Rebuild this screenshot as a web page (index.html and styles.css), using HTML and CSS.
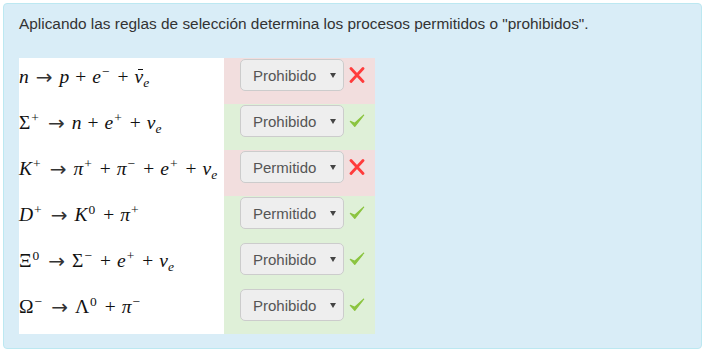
FILE: index.html
```html
<!DOCTYPE html>
<html lang="es">
<head>
    <meta charset="UTF-8">
    <meta name="viewport" content="width=device-width, initial-scale=1.0">
    <title>Reglas de selección</title>

    <link rel="stylesheet" href="styles.css">
</head>
<body>
    <div class="panel">
        <p class="enunciado">Aplicando las reglas de selección determina los procesos permitidos o "prohibidos".</p>

        <table class="procesos">
            <tr class="mal">
                <td class="eq"><i>n</i><span class="rel">→</span><i>p</i><span class="op">+</span><i>e</i><sup>−</sup><span class="op">+</span><i class="bar">ν</i><sub><i>e</i></sub></td>
                <td class="resp">
                    <div class="fila">
                        <span class="sel"><select><option>Prohibido</option><option>Permitido</option></select></span>
                        <svg class="icono" viewBox="0 0 16 16"><path d="M2 1.5 L14 14.5 M14 1.5 L2 14.5" stroke="#ff3b3b" stroke-width="2.8" stroke-linecap="round"/></svg>
                    </div>
                </td>
            </tr>
            <tr class="bien">
                <td class="eq">Σ<sup>+</sup><span class="rel">→</span><i>n</i><span class="op">+</span><i>e</i><sup>+</sup><span class="op">+</span><i>ν</i><sub><i>e</i></sub></td>
                <td class="resp">
                    <div class="fila">
                        <span class="sel"><select><option>Prohibido</option><option>Permitido</option></select></span>
                        <svg class="icono" viewBox="0 0 18 16"><path d="M1.5 8.5 L6.5 14 L16.5 1.5 L6.5 10.5 Z" fill="#8bc43f" stroke="#8bc43f" stroke-width="1.4" stroke-linejoin="round"/></svg>
                    </div>
                </td>
            </tr>
            <tr class="mal">
                <td class="eq"><i>K</i><sup>+</sup><span class="rel">→</span><i>π</i><sup>+</sup><span class="op">+</span><i>π</i><sup>−</sup><span class="op">+</span><i>e</i><sup>+</sup><span class="op">+</span><i>ν</i><sub><i>e</i></sub></td>
                <td class="resp">
                    <div class="fila">
                        <span class="sel"><select><option>Permitido</option><option>Prohibido</option></select></span>
                        <svg class="icono" viewBox="0 0 16 16"><path d="M2 1.5 L14 14.5 M14 1.5 L2 14.5" stroke="#ff3b3b" stroke-width="2.8" stroke-linecap="round"/></svg>
                    </div>
                </td>
            </tr>
            <tr class="bien">
                <td class="eq"><i>D</i><sup>+</sup><span class="rel">→</span><i>K</i><sup>0</sup><span class="op">+</span><i>π</i><sup>+</sup></td>
                <td class="resp">
                    <div class="fila">
                        <span class="sel"><select><option>Permitido</option><option>Prohibido</option></select></span>
                        <svg class="icono" viewBox="0 0 18 16"><path d="M1.5 8.5 L6.5 14 L16.5 1.5 L6.5 10.5 Z" fill="#8bc43f" stroke="#8bc43f" stroke-width="1.4" stroke-linejoin="round"/></svg>
                    </div>
                </td>
            </tr>
            <tr class="bien">
                <td class="eq">Ξ<sup>0</sup><span class="rel">→</span>Σ<sup>−</sup><span class="op">+</span><i>e</i><sup>+</sup><span class="op">+</span><i>ν</i><sub><i>e</i></sub></td>
                <td class="resp">
                    <div class="fila">
                        <span class="sel"><select><option>Prohibido</option><option>Permitido</option></select></span>
                        <svg class="icono" viewBox="0 0 18 16"><path d="M1.5 8.5 L6.5 14 L16.5 1.5 L6.5 10.5 Z" fill="#8bc43f" stroke="#8bc43f" stroke-width="1.4" stroke-linejoin="round"/></svg>
                    </div>
                </td>
            </tr>
            <tr class="bien">
                <td class="eq">Ω<sup>−</sup><span class="rel">→</span>Λ<sup>0</sup><span class="op">+</span><i>π</i><sup>−</sup></td>
                <td class="resp">
                    <div class="fila">
                        <span class="sel"><select><option>Prohibido</option><option>Permitido</option></select></span>
                        <svg class="icono" viewBox="0 0 18 16"><path d="M1.5 8.5 L6.5 14 L16.5 1.5 L6.5 10.5 Z" fill="#8bc43f" stroke="#8bc43f" stroke-width="1.4" stroke-linejoin="round"/></svg>
                    </div>
                </td>
            </tr>
        </table>
    </div>
</body>
</html>
```

FILE: styles.css
```css
body{
    margin: 0;
    font-family: "Liberation Sans", Arial, sans-serif;
    font-size: 15px;
    color: #333;
}

.panel{
    margin: 3px 2px 4px 3px;
    padding: 10px 15px 14px 15px;
    background-color: #d9edf7;
    border: 1px solid #bce8f1;
    border-radius: 4px;
}

.enunciado{
    margin: 0 0 24px 0;
    font-size: 15.4px;
    line-height: 20px;
}

.procesos{
    border-collapse: collapse;
}

.procesos td{
    padding: 0;
    height: 46px;
    box-sizing: border-box;
}

.eq{
    width: 205px;
    background-color: white;
    vertical-align: top;
    padding-top: 3px !important;
    font-family: "Liberation Serif", "Times New Roman", serif;
    font-size: 19.5px;
    line-height: 32px;
    color: #111;
    white-space: nowrap;
}

.eq .op{
    margin: 0 6px;
}

.eq .rel{
    margin: 0 7px;
    font-family: "DejaVu Sans", sans-serif;
    font-size: 20px;
    line-height: 0;
    color: #333;
    vertical-align: -1px;
}

.eq sup, .eq sub{
    font-size: 13.5px;
    line-height: 0;
}

.eq sup{
    vertical-align: 7px;
    margin-left: 1px;
    margin-right: 2px;
}

.eq sub{
    vertical-align: -4px;
}

.bar{
    position: relative;
}

.bar::before{
    content: "";
    position: absolute;
    left: 3px;
    right: 0;
    top: 3px;
    border-top: 1px solid #111;
}

.resp{
    width: 151px;
    vertical-align: top;
    padding: 1px 0 0 16px !important;
}

.mal .resp{
    background-color: #f2dede;
}

.bien .resp{
    background-color: #dff0d8;
}

.fila{
    display: flex;
    align-items: center;
    gap: 5px;
}

.sel{
    position: relative;
    display: inline-block;
}

.sel select{
    display: block;
    appearance: none;
    width: 104px;
    height: 32px;
    padding: 0 12px;
    font-family: "Liberation Sans", Arial, sans-serif;
    font-size: 15px;
    color: #555;
    background-color: #eeeeee;
    border: 1px solid #ccc;
    border-radius: 5px;
}

.sel::after{
    content: "";
    position: absolute;
    right: 8px;
    top: 14px;
    border-left: 3.5px solid transparent;
    border-right: 3.5px solid transparent;
    border-top: 5px solid #444;
    pointer-events: none;
}

.icono{
    width: 16px;
    height: 16px;
}
```
